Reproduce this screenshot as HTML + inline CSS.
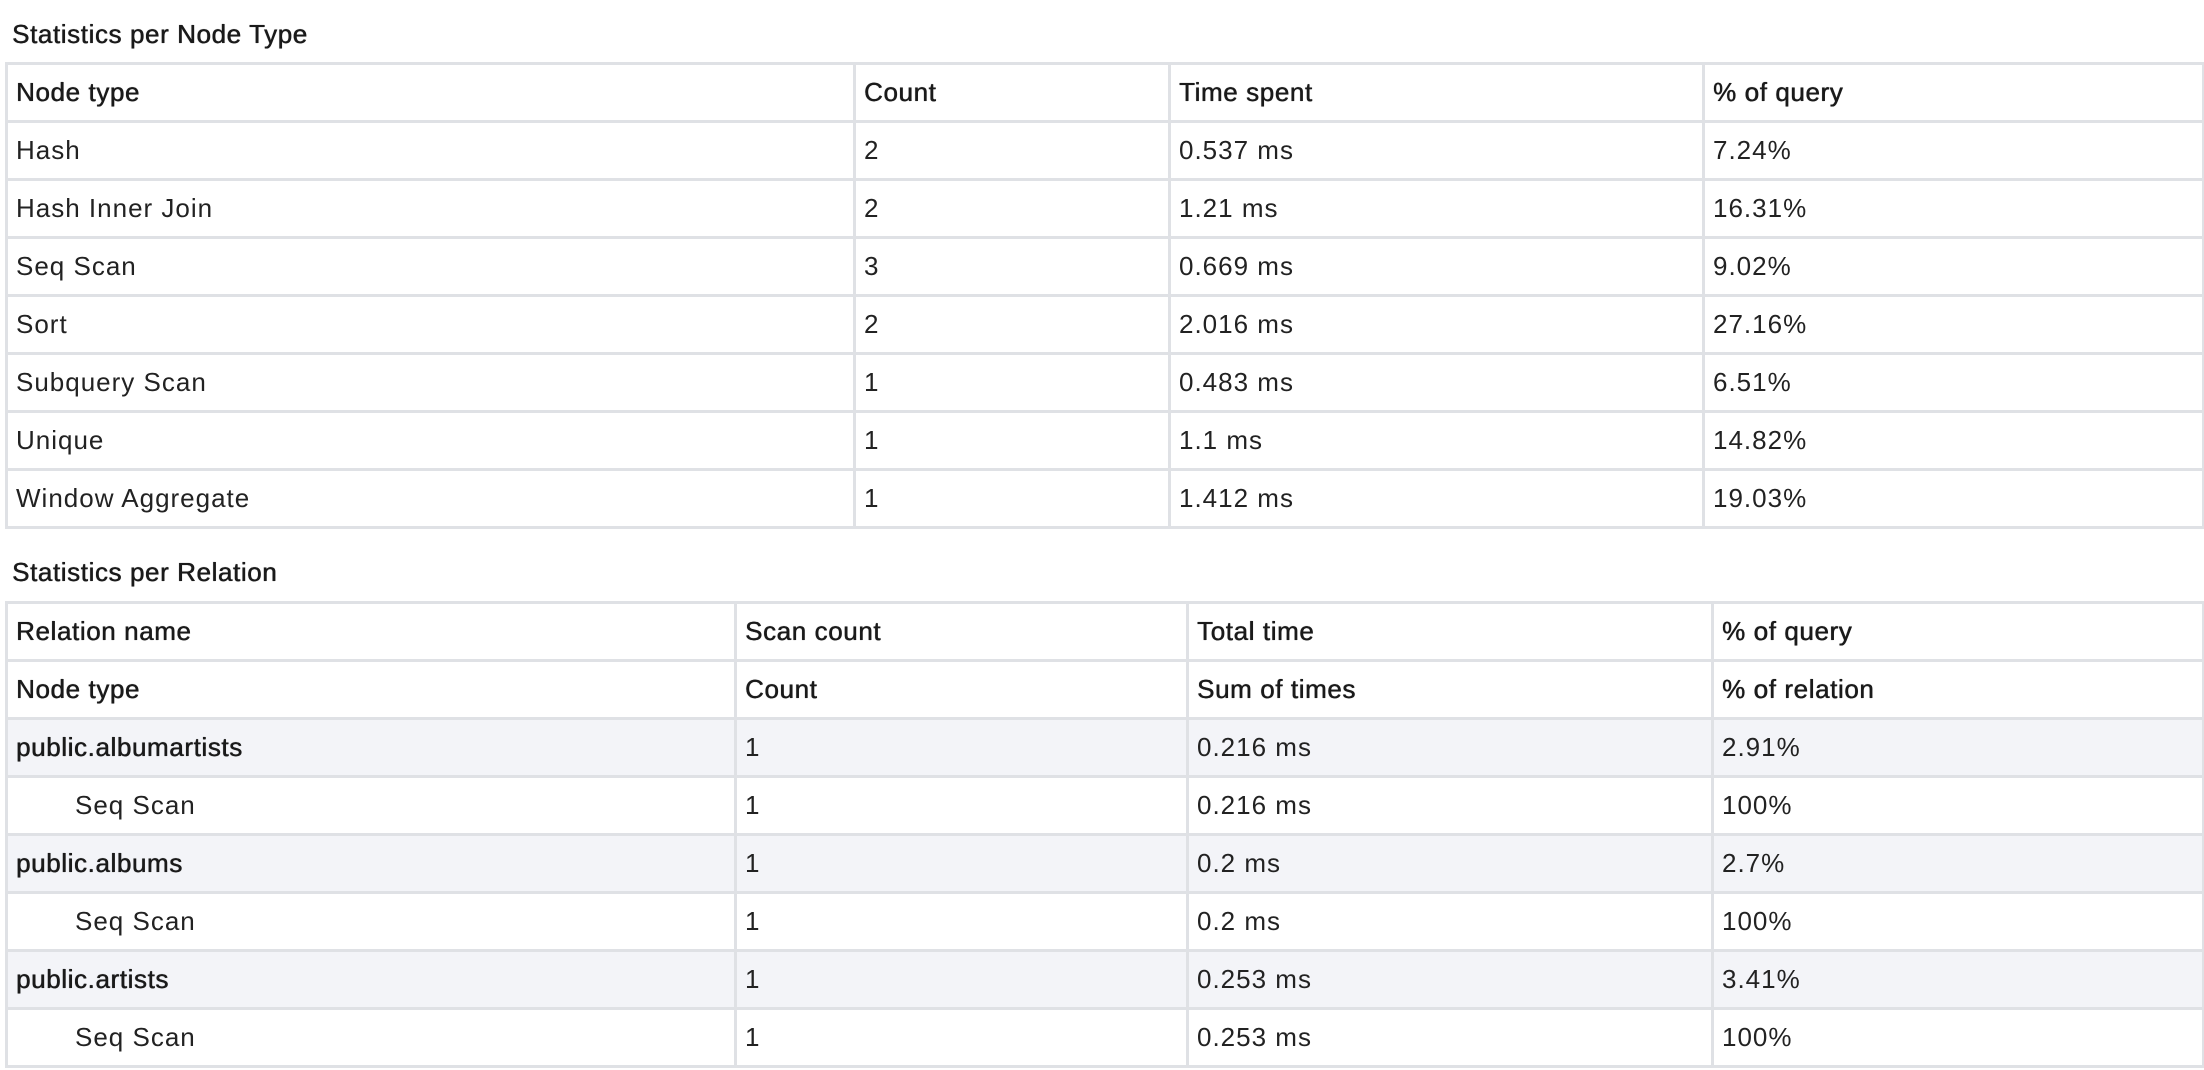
<!DOCTYPE html>
<html><head><meta charset="utf-8"><style>
html,body{margin:0;padding:0;background:#fff;}
body{width:2204px;height:1070px;overflow:hidden;font-family:"Liberation Sans",Arial,sans-serif;color:#222;}
h3{position:absolute;left:12px;margin:0;font-size:26px;font-weight:normal;line-height:30px;color:#1a1a1a;letter-spacing:0.6px;text-shadow:0 0 0.6px #1a1a1a,0.4px 0 0 #1a1a1a;}
table{position:absolute;left:5px;width:2197px;border-collapse:collapse;table-layout:fixed;font-size:26px;letter-spacing:1px;}
td,th{border:3px solid #dfe1e5;height:55px;padding:0 0 0 8px;text-align:left;white-space:nowrap;}
th{font-weight:normal;color:#1a1a1a;letter-spacing:0.6px;text-shadow:0 0 0.6px #1a1a1a,0.4px 0 0 #1a1a1a;}
tr.s td{background:#f3f4f8;}
tr.s td:first-child{color:#1a1a1a;letter-spacing:0.6px;text-shadow:0 0 0.6px #1a1a1a,0.4px 0 0 #1a1a1a;}
td.i{padding-left:67px;}
</style></head><body>
<h3 style="top:19px">Statistics per Node Type</h3>
<table style="top:62px">
<colgroup><col style="width:848px"><col style="width:315px"><col style="width:534px"><col style="width:500px"></colgroup>
<tr><th>Node type</th><th>Count</th><th>Time spent</th><th>% of query</th></tr>
<tr><td>Hash</td><td>2</td><td>0.537 ms</td><td>7.24%</td></tr>
<tr><td>Hash Inner Join</td><td>2</td><td>1.21 ms</td><td>16.31%</td></tr>
<tr><td>Seq Scan</td><td>3</td><td>0.669 ms</td><td>9.02%</td></tr>
<tr><td>Sort</td><td>2</td><td>2.016 ms</td><td>27.16%</td></tr>
<tr><td>Subquery Scan</td><td>1</td><td>0.483 ms</td><td>6.51%</td></tr>
<tr><td>Unique</td><td>1</td><td>1.1 ms</td><td>14.82%</td></tr>
<tr><td>Window Aggregate</td><td>1</td><td>1.412 ms</td><td>19.03%</td></tr>
</table>
<h3 style="top:557px">Statistics per Relation</h3>
<table style="top:601px">
<colgroup><col style="width:729px"><col style="width:452px"><col style="width:525px"><col style="width:491px"></colgroup>
<tr><th>Relation name</th><th>Scan count</th><th>Total time</th><th>% of query</th></tr>
<tr><th>Node type</th><th>Count</th><th>Sum of times</th><th>% of relation</th></tr>
<tr class="s"><td>public.albumartists</td><td>1</td><td>0.216 ms</td><td>2.91%</td></tr>
<tr><td class="i">Seq Scan</td><td>1</td><td>0.216 ms</td><td>100%</td></tr>
<tr class="s"><td>public.albums</td><td>1</td><td>0.2 ms</td><td>2.7%</td></tr>
<tr><td class="i">Seq Scan</td><td>1</td><td>0.2 ms</td><td>100%</td></tr>
<tr class="s"><td>public.artists</td><td>1</td><td>0.253 ms</td><td>3.41%</td></tr>
<tr><td class="i">Seq Scan</td><td>1</td><td>0.253 ms</td><td>100%</td></tr>
</table>
</body></html>
